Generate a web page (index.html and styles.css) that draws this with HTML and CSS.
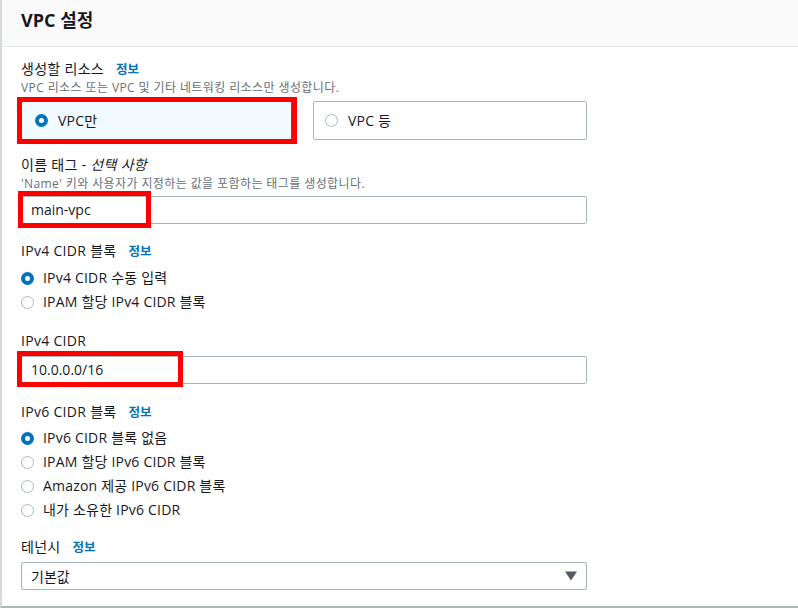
FILE: index.html
```html
<!DOCTYPE html>
<html lang="ko">
<head>
<meta charset="utf-8">
<link rel="stylesheet" href="styles.css">
</head>
<body>
<div class="panel">
  <div class="header"><h2 class="title">VPC 설정</h2></div>
  <div class="content">
    <div class="field f-res">
      <div class="label">생성할 리소스 <a class="info">정보</a></div>
      <div class="desc">VPC 리소스 또는 VPC 및 기타 네트워킹 리소스만 생성합니다.</div>
      <div class="tiles">
        <div class="tile selected">
          <span class="radio checked"></span><span class="rtext">VPC만</span>
          <span class="mark mark-tile"></span>
        </div>
        <div class="tile">
          <span class="radio"></span><span class="rtext">VPC 등</span>
        </div>
      </div>
    </div>

    <div class="field f-name">
      <div class="label">이름 태그 - <i>선택 사항</i></div>
      <div class="desc">'Name' 키와 사용자가 지정하는 값을 포함하는 태그를 생성합니다.</div>
      <div class="control">
        <div class="input">main-vpc</div>
        <span class="mark mark-name"></span>
      </div>
    </div>

    <div class="field f-v4">
      <div class="label">IPv4 CIDR 블록 <a class="info">정보</a></div>
      <div class="radios">
        <div class="ritem"><span class="radio checked"></span><span class="rtext">IPv4 CIDR 수동 입력</span></div>
        <div class="ritem"><span class="radio"></span><span class="rtext">IPAM 할당 IPv4 CIDR 블록</span></div>
      </div>
    </div>

    <div class="field f-cidr">
      <div class="label">IPv4 CIDR</div>
      <div class="control">
        <div class="input">10.0.0.0/16</div>
        <span class="mark mark-cidr"></span>
      </div>
    </div>

    <div class="field f-v6">
      <div class="label">IPv6 CIDR 블록 <a class="info">정보</a></div>
      <div class="radios">
        <div class="ritem"><span class="radio checked"></span><span class="rtext">IPv6 CIDR 블록 없음</span></div>
        <div class="ritem"><span class="radio"></span><span class="rtext">IPAM 할당 IPv6 CIDR 블록</span></div>
        <div class="ritem"><span class="radio"></span><span class="rtext">Amazon 제공 IPv6 CIDR 블록</span></div>
        <div class="ritem"><span class="radio"></span><span class="rtext">내가 소유한 IPv6 CIDR</span></div>
      </div>
    </div>

    <div class="field f-ten">
      <div class="label">테넌시 <a class="info">정보</a></div>
      <div class="select">
        <span>기본값</span>
        <svg class="caret" width="12" height="10" viewBox="0 0 12 10"><path d="M0 0.5 H12 L6 9.5 Z" fill="#545b64"/></svg>
      </div>
    </div>
  </div>
</div>
</body>
</html>
```

FILE: styles.css
```css
* { box-sizing: border-box; }
html, body { margin: 0; padding: 0; background: #ffffff; }
body {
  font-family: "Open Sans", "Noto Sans CJK KR", sans-serif;
  color: #16191f;
  font-size: 14px;
}
.panel {
  width: 798px;
  height: 608px;
  border-left: 2px solid #d5dbdb;
  border-bottom: 2px solid #aab7b8;
  background: #ffffff;
}
.header {
  height: 47px;
  background: #fafafa;
  border-bottom: 1px solid #eaeded;
  padding: 0 0 0 19px;
  display: flex;
  align-items: center;
}
.title {
  margin: 0 0 6px 0;
  font-size: 18px;
  font-weight: 700;
  line-height: 24px;
}
.content {
  padding: 11px 0 0 19px;
  width: 585px;
}
.field { display: flex; flex-direction: column; }
.label {
  font-size: 14px;
  line-height: 22px;
  height: 22px;
  letter-spacing: 0.3px;
}
.label i { font-style: italic; }
.info {
  color: #0073bb;
  font-weight: 700;
  font-size: 12.5px;
  margin-left: 8px;
  letter-spacing: 0;
}
.desc {
  font-size: 12px;
  line-height: 16px;
  color: #687078;
  letter-spacing: 0.4px;
}
.tiles {
  margin-top: 5px;
  display: grid;
  grid-template-columns: 271px 274px;
  column-gap: 21px;
}
.tile {
  position: relative;
  height: 39px;
  border: 1px solid #aab7b8;
  border-radius: 2px;
  display: flex;
  align-items: center;
  padding-left: 11px;
}
.tile.selected {
  background: #f1faff;
  border-color: #0073bb;
  padding-left: 13px;
}
.tile .rtext { margin-left: 10px; }
.radio {
  width: 13px;
  height: 13px;
  border-radius: 50%;
  border: 1.5px solid #aab7b8;
  background: #fff;
  flex: none;
}
.radio.checked {
  border: 4px solid #0073bb;
}
.rtext { font-size: 14px; line-height: 20px; letter-spacing: 0.2px; }
.control { position: relative; margin-top: 4px; }
.input {
  height: 28px;
  border: 1px solid #aab7b8;
  border-radius: 2px;
  padding-left: 9px;
  font-size: 14px;
  line-height: 26px;
}
.mark {
  position: absolute;
  border: 5px solid #ff0000;
  pointer-events: none;
}
.mark-tile { left: -5px; top: -5px; width: 280px; height: 47px; }
.mark-name { left: -3px; top: -5px; width: 133px; height: 37px; }
.mark-cidr { left: -4px; top: -5px; width: 166px; height: 36px; }
.radios { display: flex; flex-direction: column; margin-top: 4px; }
.ritem {
  display: flex;
  align-items: center;
  height: 24px;
  padding-left: 0;
}
.ritem .rtext { margin-left: 9px; }
.f-name { margin-top: 14px; }
.f-v4 { margin-top: 16px; }
.f-cidr { margin-top: 16px; }
.f-v6 { margin-top: 17px; }
.f-v6 .radios { margin-top: 3px; }
.f-ten { margin-top: 14px; }
.select {
  margin-top: 4px;
  height: 28px;
  border: 1px solid #aab7b8;
  border-radius: 2px;
  padding: 0 9px 0 9px;
  display: flex;
  align-items: center;
  justify-content: space-between;
  font-size: 14px;
}
.caret { display: block; }
```
